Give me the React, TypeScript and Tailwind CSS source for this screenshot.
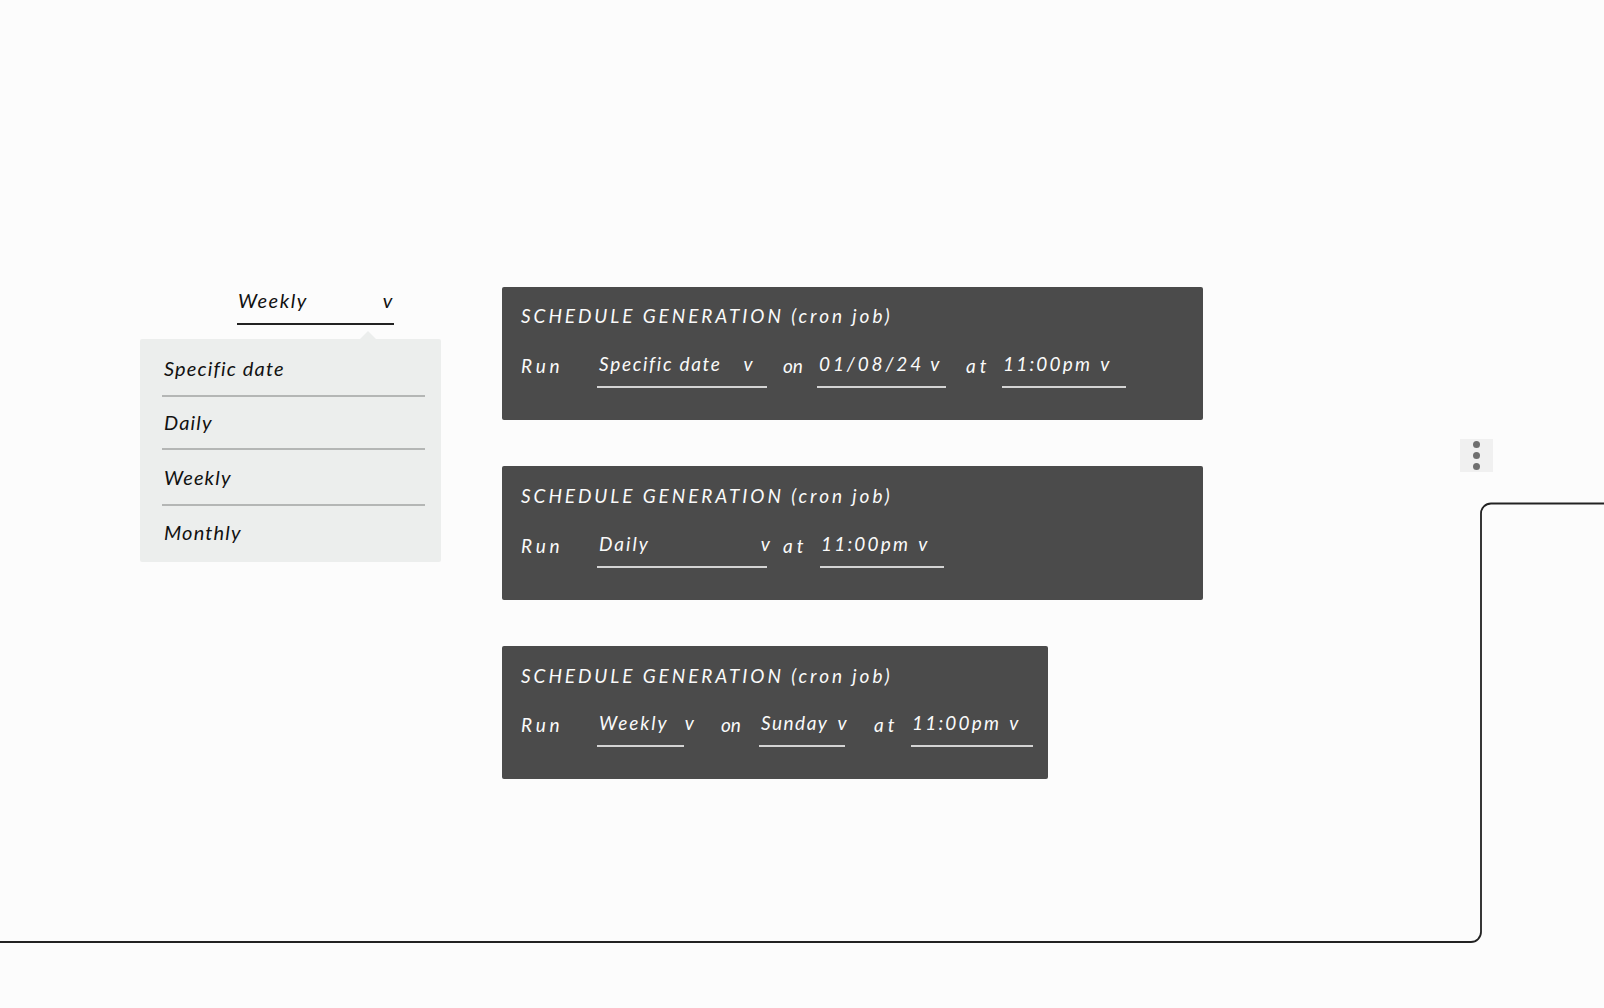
const hand = "font-['Lato',sans-serif] italic font-normal";

function Field({ label, w, tracking, gap }: { label: string; w: string; tracking: string; gap: string }) {
  return (
    <div className={`${w} h-[44px] shrink-0 border-b-2 border-[#d4d4d4] pl-[2px] pt-[8px] flex items-start text-[19px] leading-[24px] whitespace-nowrap`}>
      <span className={tracking}>{label}</span>
      <span className={`${gap} shrink-0`}>v</span>
    </div>
  );
}

function Card({ w, h, pt, mt, children }: { w: string; h: string; pt: string; mt: string; children: React.ReactNode }) {
  return (
    <section className={`${w} ${h} ${pt} rounded-[2px] bg-[#4b4b4b] pl-[19px] text-[#fafafa] ${hand}`}>
      <h2 className="text-[19px] leading-[24px] tracking-[2.93px] whitespace-nowrap">SCHEDULE GENERATION (cron job)</h2>
      <div className={`${mt} flex items-start`}>{children}</div>
    </section>
  );
}

function Word({ children, w, ml, tracking }: { children: string; w: string; ml?: string; tracking?: string }) {
  return <span className={`${w} ${ml ?? ""} ${tracking ?? ""} shrink-0 pt-[10px] text-[19px] leading-[24px]`}>{children}</span>;
}

function Option({ label, h, pt, last }: { label: string; h: string; pt: string; last?: boolean }) {
  return (
    <li className={`${h} ${pt} pl-[2px] text-[20px] leading-[26px] tracking-[1.15px] text-[#111111] ${last ? "" : "border-b-2 border-[#b4b6b5]"}`}>{label}</li>
  );
}

export default function App() {
  return (
    <main className="relative h-[1008px] w-[1604px] overflow-hidden bg-[#fcfcfc]">
      <div className="flex items-start pl-[140px] pt-[287px]">
        <div className={`w-[301px] shrink-0 ${hand}`}>
          <div className="ml-[97px] flex h-[38px] w-[157px] items-start border-b-2 border-[#222222] pl-[1px] text-[20px] leading-[26px] text-[#111111]">
            <span className="tracking-[1.5px]">Weekly</span>
            <span className="ml-[75px]">v</span>
          </div>
          <div className="relative mt-[14px] h-[223px] rounded-[2px] bg-[#eceeed] pl-[22px] pr-[16px]">
            <span className="absolute -top-[8px] left-[220px] h-0 w-0 border-x-[8px] border-b-[8px] border-x-transparent border-b-[#eceeed]" />
            <ul>
              <Option label="Specific date" h="h-[58px]" pt="pt-[16px]" />
              <Option label="Daily" h="h-[53px]" pt="pt-[12px]" />
              <Option label="Weekly" h="h-[56px]" pt="pt-[14px]" />
              <Option label="Monthly" h="h-[56px]" pt="pt-[13px]" last />
            </ul>
          </div>
        </div>

        <div className="ml-[61px] flex w-[701px] shrink-0 flex-col gap-[46px]">
          <Card w="w-[701px]" h="h-[133px]" pt="pt-[17px]" mt="mt-[16px]">
            <Word w="w-[76px]" tracking="tracking-[3.9px]">Run</Word>
            <Field label="Specific date" w="w-[170px]" tracking="tracking-[1.7px]" gap="ml-[22px]" />
            <Word w="w-[34px]" ml="ml-[16px]">on</Word>
            <Field label="01/08/24" w="w-[129px]" tracking="tracking-[2.9px]" gap="ml-[6px]" />
            <Word w="w-[36px]" ml="ml-[20px]" tracking="tracking-[4px]">at</Word>
            <Field label="11:00pm" w="w-[124px]" tracking="tracking-[2.2px] -ml-[1px]" gap="ml-[8px]" />
          </Card>
          <Card w="w-[701px]" h="h-[134px]" pt="pt-[18px]" mt="mt-[16px]">
            <Word w="w-[76px]" tracking="tracking-[3.9px]">Run</Word>
            <Field label="Daily" w="w-[170px]" tracking="tracking-[2px]" gap="ml-[111px]" />
            <Word w="w-[37px]" ml="ml-[16px]" tracking="tracking-[4px]">at</Word>
            <Field label="11:00pm" w="w-[124px]" tracking="tracking-[2.2px] -ml-[1px]" gap="ml-[8px]" />
          </Card>
          <Card w="w-[546px]" h="h-[133px]" pt="pt-[18px]" mt="mt-[15px]">
            <Word w="w-[76px]" tracking="tracking-[3.9px]">Run</Word>
            <Field label="Weekly" w="w-[87px]" tracking="tracking-[2px]" gap="ml-[16px]" />
            <Word w="w-[38px]" ml="ml-[37px]">on</Word>
            <Field label="Sunday" w="w-[86px]" tracking="tracking-[1.5px]" gap="ml-[9px]" />
            <Word w="w-[37px]" ml="ml-[29px]" tracking="tracking-[4px]">at</Word>
            <Field label="11:00pm" w="w-[122px]" tracking="tracking-[2.2px] -ml-[1px]" gap="ml-[8px]" />
          </Card>
        </div>

        <div className="ml-[257px] mt-[152px] flex h-[33px] w-[33px] shrink-0 flex-col items-center justify-center gap-[4px] bg-[#f0f0f0]">
          <span className="h-[7px] w-[7px] rounded-full bg-[#6f6f6f]" />
          <span className="h-[7px] w-[7px] rounded-full bg-[#6f6f6f]" />
          <span className="h-[7px] w-[7px] rounded-full bg-[#6f6f6f]" />
        </div>
      </div>

      <svg className="absolute inset-0" width="1604" height="1008" fill="none" aria-hidden="true">
        <path d="M1604 503.5H1491a10 10 0 0 0-10 10V932a10 10 0 0 1-10 10H0" stroke="#222222" strokeWidth="1.8" />
      </svg>
    </main>
  );
}
